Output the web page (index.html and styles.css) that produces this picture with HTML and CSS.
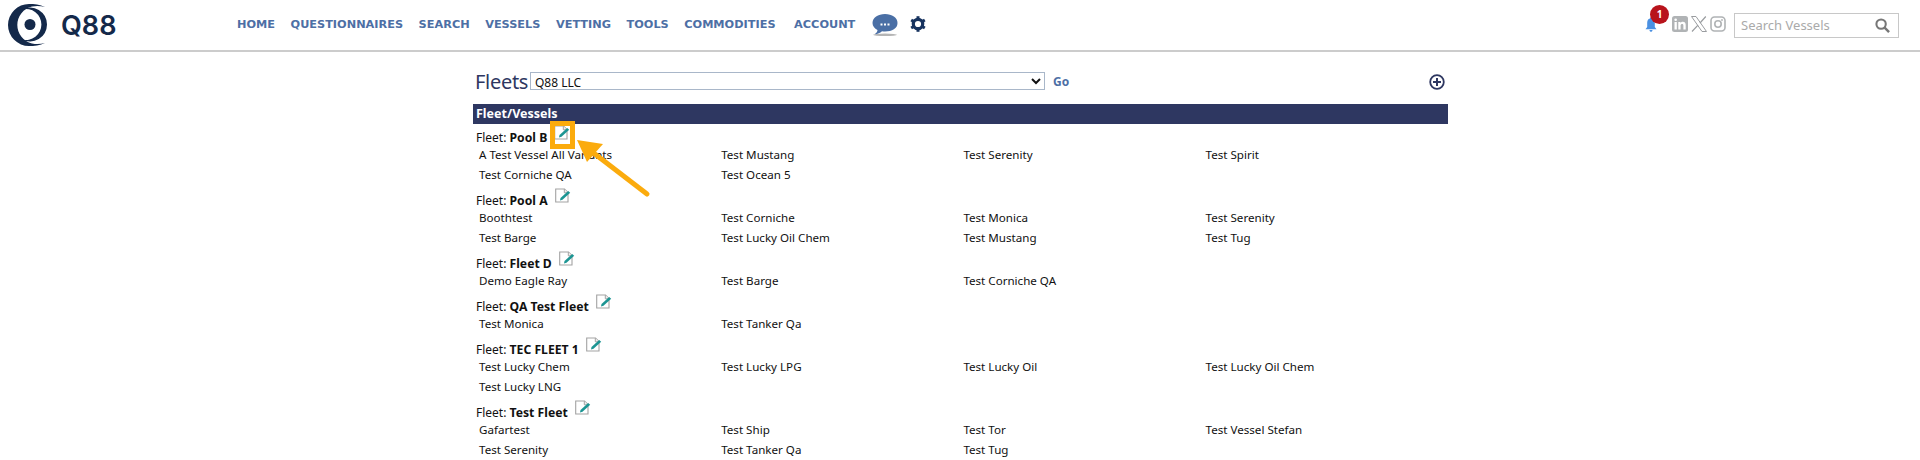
FILE: index.html
```html
<!DOCTYPE html>
<html lang="en">
<head>
<meta charset="utf-8">
<title>Fleets</title>
<link rel="stylesheet" href="styles.css">
</head>
<body>
<svg width="0" height="0" class="defs">
  <symbol id="edit" viewBox="0 0 16 16">
    <path d="M.7 1H9.500L13 4.500V14H.7Z" fill="#fff" stroke="#a3a3a3" stroke-width="1.100"/>
    <path d="M9.300 1V4.800H13" fill="#f0f0f0" stroke="#a3a3a3" stroke-width="1"/>
    <path d="M5 12.400L5.500 10L13.200 3L15.200 4.700L7.500 11.800Z" fill="#1c9593"/>
  </symbol>
</svg>
<header class="topbar">
  <a class="brand">
    <svg class="brand-mark" viewBox="8 4 40 42" width="40" height="42">
      <path d="M45 7C40 4.500 34 4 29 4A21 21 0 0 0 29 46C34 46 40 45.500 45 43C41 44 37 44.500 32 43.500A19 19 0 0 1 32 6.500C37 5.500 41 6 45 7Z" fill="#14294a"/>
      <path d="M22 9.500A17 17 0 1 1 22 39.500A15.500 15.500 0 1 0 22 9.500Z" fill="#14294a"/>
      <circle cx="30" cy="24.500" r="5.500" fill="#14294a"/>
    </svg>
    <span class="brand-name">Q88</span>
  </a>
  <nav class="mainnav">
    <a>HOME</a><a>QUESTIONNAIRES</a><a>SEARCH</a><a>VESSELS</a><a>VETTING</a><a>TOOLS</a><a>COMMODITIES</a><a class="account">ACCOUNT</a>
    <svg class="chat" viewBox="0 0 26 24" width="26" height="24">
      <ellipse cx="13" cy="21.800" rx="12" ry="1.200" fill="#b5b5b5"/>
      <path d="M13 1C20 1 25.500 4.500 25.500 10C25.500 15.500 20 18.500 13 18.500C12 18.500 11 18.500 10 18.300C8 20 6 21 2.500 21.300C4.500 20 5.500 18.500 5.500 17C2.500 15.500 .5 13 .5 10C.5 4.500 6 1 13 1Z" fill="#4a6fa5"/>
      <rect x="8.500" y="10.500" width="2" height="2" fill="#fff"/><rect x="12" y="10.500" width="2" height="2" fill="#fff"/><rect x="15.500" y="10.500" width="2" height="2" fill="#fff"/>
    </svg>
    <svg class="gear" viewBox="0 0 16 16" width="16" height="16">
      <circle cx="8" cy="8" r="4.700" fill="none" stroke="#17335f" stroke-width="3.200"/>
      <g stroke="#17335f" stroke-width="3">
        <path d="M8 .2V3"/><path d="M8 13V15.800"/><path d="M1.200 4L3.700 5.500"/><path d="M12.300 10.500L14.800 12"/><path d="M1.200 12L3.700 10.500"/><path d="M12.300 5.500L14.800 4"/>
      </g>
    </svg>
  </nav>
  <div class="tools">
    <span class="bell">
      <svg viewBox="0 0 12 15" width="12" height="15"><path d="M6 .5C6.800 .5 7 1 7 1.500C9 2 9.800 3.700 9.800 6V10L11.500 12.300H.5L2.200 10V6C2.200 3.700 3 2 5 1.500C5 1 5.200 .5 6 .5Z" fill="#4a90e2"/><path d="M4.500 13H7.500C7.500 14 6.800 14.800 6 14.800C5.200 14.800 4.500 14 4.500 13Z" fill="#4a90e2"/></svg>
      <b class="badge">1</b>
    </span>
    <svg class="social" viewBox="0 0 16 16" width="16" height="16"><rect width="16" height="16" rx="2.500" fill="#b0b3b5"/><rect x="2.500" y="6" width="2.300" height="7.500" fill="#fff"/><circle cx="3.650" cy="3.800" r="1.300" fill="#fff"/><path d="M6.300 6H8.500V7C9 6.300 9.800 5.800 10.900 5.800C13 5.800 13.700 7.100 13.700 9.200V13.500H11.400V9.700C11.400 8.700 11.100 8 10.200 8C9.200 8 8.600 8.600 8.600 9.700V13.500H6.300Z" fill="#fff"/></svg>
    <svg class="social" viewBox="0 0 16 16" width="16" height="16"><path d="M.5 .5H5L15.500 15.500H11Z" fill="none" stroke="#9a9da0" stroke-width="1"/><path d="M14.800 .5L9 7M7 9.200L1 15.500" fill="none" stroke="#9a9da0" stroke-width="1.200"/></svg>
    <svg class="social" viewBox="0 0 16 16" width="16" height="16"><rect x="1" y="1" width="14" height="14" rx="3.500" fill="none" stroke="#b0b3b5" stroke-width="1.600"/><circle cx="8" cy="8" r="3.200" fill="none" stroke="#b0b3b5" stroke-width="1.600"/><circle cx="12" cy="4" r=".9" fill="#b0b3b5"/></svg>
    <div class="search">
      <span>Search Vessels</span>
      <svg viewBox="0 0 16 16" width="15" height="15"><circle cx="6.500" cy="6.500" r="5" fill="none" stroke="#777" stroke-width="2.200"/><path d="M10 10L15 15" stroke="#777" stroke-width="2.600"/></svg>
    </div>
  </div>
</header>
<main class="content">
  <div class="titlerow">
    <h1>Fleets</h1>
    <select class="fleetselect"><option>Q88 LLC</option></select>
    <a class="go">Go</a>
    <svg class="add" viewBox="0 0 16 16" width="16" height="16"><circle cx="8" cy="8" r="6.800" fill="none" stroke="#2e3761" stroke-width="1.800"/><path d="M8 4V12M4 8H12" stroke="#2e3761" stroke-width="2"/></svg>
  </div>
  <div class="bar">Fleet/Vessels</div>
  <section class="fleet">
    <div class="fleetname">Fleet: <b>Pool B</b><svg class="edit"><use href="#edit"/></svg></div>
    <div class="vessels"><span>A Test Vessel All Variants</span><span>Test Mustang</span><span>Test Serenity</span><span>Test Spirit</span><span>Test Corniche QA</span><span>Test Ocean 5</span></div>
  </section>
  <section class="fleet">
    <div class="fleetname">Fleet: <b>Pool A</b><svg class="edit"><use href="#edit"/></svg></div>
    <div class="vessels"><span>Boothtest</span><span>Test Corniche</span><span>Test Monica</span><span>Test Serenity</span><span>Test Barge</span><span>Test Lucky Oil Chem</span><span>Test Mustang</span><span>Test Tug</span></div>
  </section>
  <section class="fleet">
    <div class="fleetname">Fleet: <b>Fleet D</b><svg class="edit"><use href="#edit"/></svg></div>
    <div class="vessels"><span>Demo Eagle Ray</span><span>Test Barge</span><span>Test Corniche QA</span></div>
  </section>
  <section class="fleet">
    <div class="fleetname">Fleet: <b>QA Test Fleet</b><svg class="edit"><use href="#edit"/></svg></div>
    <div class="vessels"><span>Test Monica</span><span>Test Tanker Qa</span></div>
  </section>
  <section class="fleet">
    <div class="fleetname">Fleet: <b>TEC FLEET 1</b><svg class="edit"><use href="#edit"/></svg></div>
    <div class="vessels"><span>Test Lucky Chem</span><span>Test Lucky LPG</span><span>Test Lucky Oil</span><span>Test Lucky Oil Chem</span><span>Test Lucky LNG</span></div>
  </section>
  <section class="fleet">
    <div class="fleetname">Fleet: <b>Test Fleet</b><svg class="edit"><use href="#edit"/></svg></div>
    <div class="vessels"><span>Gafartest</span><span>Test Ship</span><span>Test Tor</span><span>Test Vessel Stefan</span><span>Test Serenity</span><span>Test Tanker Qa</span><span>Test Tug</span></div>
  </section>
</main>
<div class="callout-box"></div>
<svg class="callout-arrow" viewBox="0 0 90 70" width="90" height="70">
  <path d="M70 62L14 19" stroke="#fbab0d" stroke-width="5" stroke-linecap="round"/>
  <path d="M0 8L26 12L10 30Z" fill="#fbab0d"/>
</svg>
</body>
</html>
```
FILE: styles.css
```css
* { box-sizing: border-box; }
html, body { margin: 0; padding: 0; }
body { height: 460px; overflow: hidden; background: #fff; color: #111; font-family: "Noto Sans", "DejaVu Sans", sans-serif; font-size: 12px; position: relative; }
.defs { position: absolute; }
.topbar { height: 52px; border-bottom: 2px solid #ccc; display: flex; align-items: center; padding: 0 21px 0 8px; }
.brand { display: flex; align-items: center; gap: 13px; width: 230px; }
.brand-mark { flex: none; }
.brand-name { font-family: Inter, sans-serif; font-weight: 600; font-size: 27px; color: #14294a; }
.mainnav { display: flex; align-items: center; gap: 15.500px; margin-left: -1px; margin-top: -2px; }
.mainnav a { font-family: "DejaVu Sans", sans-serif; font-weight: 700; font-size: 11.300px; color: #4d6fa5; }
.mainnav .account { margin-left: 3px; }
.chat { margin-left: 1px; margin-top: 2px; }
.gear { margin-left: -3px; }
.tools { margin-left: auto; display: flex; align-items: center; gap: 3px; }
.bell { position: relative; display: block; width: 12px; height: 15px; margin-right: 12px; margin-top: -1px; }
.bell svg { display: block; }
.badge { position: absolute; left: 5px; top: -12px; width: 19px; height: 19px; border-radius: 50%; background: #b8141c; color: #fff; font-size: 10px; line-height: 19px; text-align: center; }
.social { margin-top: -2px; }
.search { width: 165px; height: 25px; margin-left: 5px; border: 1px solid #c8c8c8; display: flex; align-items: center; justify-content: space-between; padding: 0 8px 0 6px; color: #aaa; font-size: 13px; }
.content { width: 975px; margin: 0 0 0 473px; }
.titlerow { height: 52px; display: flex; align-items: center; padding: 6px 3px 0 2px; }
h1 { margin: 0; font-weight: 400; font-size: 20px; color: #2e3761; width: 55px; letter-spacing: -.3px; }
.fleetselect { width: 515px; height: 18px; padding: 0; background: #fff; border: 1px solid #a9b7c9; font-family: inherit; font-size: 12px; color: #111; }
.go { margin-left: 8px; font-weight: 700; color: #4d6fa5; font-size: 12px; }
.add { margin-left: auto; margin-top: 1px; }
.bar { height: 20px; background: #2e3761; color: #fff; font-weight: 700; font-size: 12.500px; line-height: 20px; padding-left: 3px; }
.fleetname { height: 21px; padding: 5px 0 0 3px; display: flex; align-items: center; white-space: pre; }
.fleetname b { font-weight: 700; font-size: 12.200px; }
.edit { width: 16px; height: 16px; margin: -8px 0 0 7px; }
.vessels { display: grid; grid-template-columns: repeat(4, 242.200px); grid-auto-rows: 20px; padding: 0 0 2px 6px; line-height: 20px; font-size: 11.600px; }
.callout-box { position: absolute; left: 550px; top: 121px; width: 25px; height: 28px; border: 5px solid #fbab0d; }
.callout-arrow { position: absolute; left: 577px; top: 132px; }
```
